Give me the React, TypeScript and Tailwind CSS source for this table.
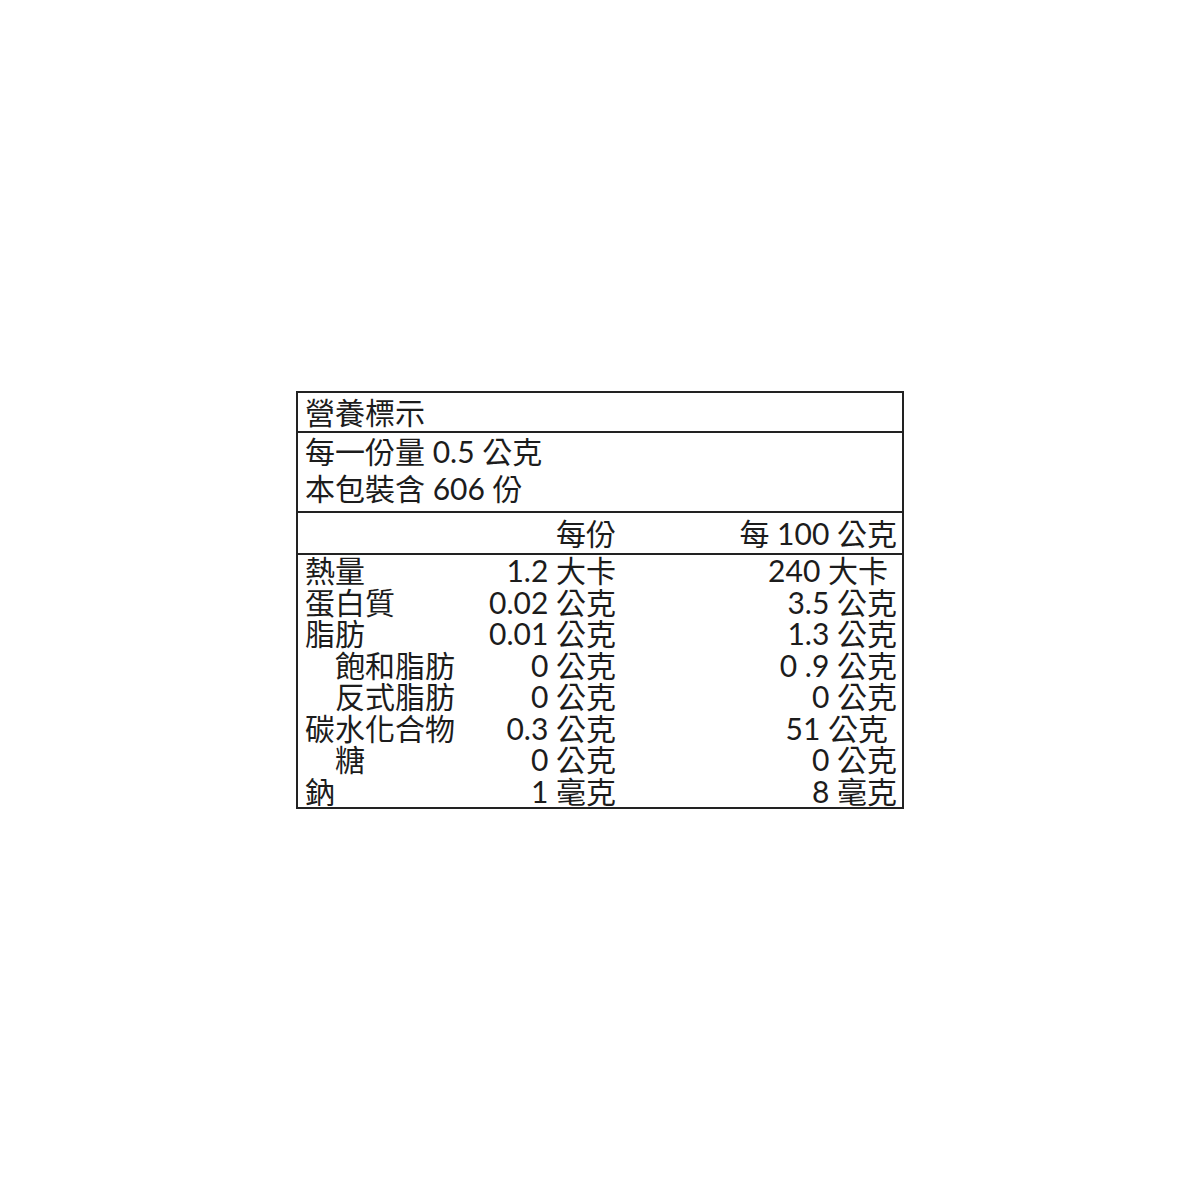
import React from "react";

interface Row {
  label: string;
  indent?: boolean;
  perServing: string;
  per100: string;
  trail?: boolean;
}

const rows: Row[] = [
  { label: "熱量", perServing: "1.2 大卡", per100: "240 大卡", trail: true },
  { label: "蛋白質", perServing: "0.02 公克", per100: "3.5 公克" },
  { label: "脂肪", perServing: "0.01 公克", per100: "1.3 公克" },
  { label: "飽和脂肪", indent: true, perServing: "0 公克", per100: "0 .9 公克" },
  { label: "反式脂肪", indent: true, perServing: "0 公克", per100: "0 公克" },
  { label: "碳水化合物", perServing: "0.3 公克", per100: "51 公克", trail: true },
  { label: "糖", indent: true, perServing: "0 公克", per100: "0 公克" },
  { label: "鈉", perServing: "1 毫克", per100: "8 毫克" },
];

export default function App() {
  return (
    <div
      className="w-full h-[1200px] bg-white flex items-center justify-center text-[#1c1c1c]"
      style={{ fontFamily: 'Lato, "Noto Sans CJK TC", sans-serif' }}
    >
      <div className="w-[608px] border-2 border-[#222] text-[30px]">
        {/* Title */}
        <div className="h-[40px] border-b-2 border-[#222] px-[7px] flex items-center leading-none">
          營養標示
        </div>

        {/* Serving info */}
        <div className="h-[80px] border-b-2 border-[#222] px-[7px] leading-[37px]">
          <div>每一份量 0.5 公克</div>
          <div>本包裝含 606 份</div>
        </div>

        {/* Column header */}
        <div className="h-[42px] border-b-2 border-[#222] grid grid-cols-[318px_1fr] items-center leading-none">
          <div className="text-right">每份</div>
          <div className="text-right pr-[5px]">每 100 公克</div>
        </div>

        {/* Body */}
        <div className="leading-[31.5px]">
          {rows.map((r) => (
            <div key={r.label} className="grid grid-cols-[318px_1fr] h-[31.5px]">
              <div className="flex justify-between pl-[7px]">
                <span className={r.indent ? "pl-[30px]" : ""}>{r.label}</span>
                <span>{r.perServing}</span>
              </div>
              <div className={`text-right ${r.trail ? "pr-[14px]" : "pr-[5px]"}`}>{r.per100}</div>
            </div>
          ))}
        </div>
      </div>
    </div>
  );
}
